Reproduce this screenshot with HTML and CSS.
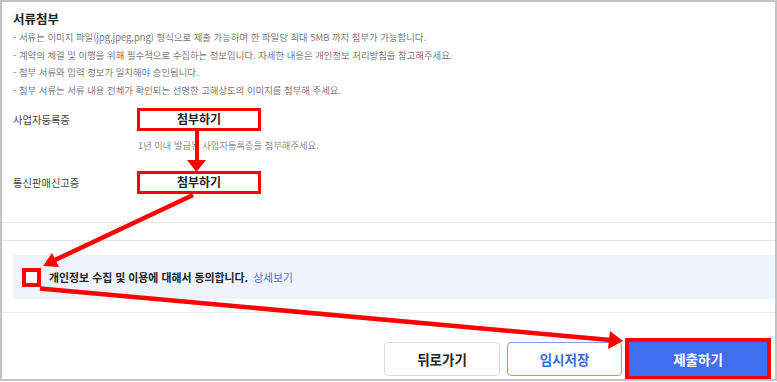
FILE: index.html
```html
<!DOCTYPE html>
<html lang="ko">
<head>
<meta charset="utf-8">
<title>서류첨부</title>
<link rel="stylesheet" href="styles.css">
</head>
<body>
<div class="frame">
  <section class="docs">
    <h2 class="title">서류첨부</h2>
    <ul class="notes">
      <li>- 서류는 이미지 파일(jpg,jpeg,png) 형식으로 제출 가능하며 한 파일당 최대 5MB 까지 첨부가 가능합니다.</li>
      <li>- 계약의 체결 및 이행을 위해 필수적으로 수집하는 정보입니다. 자세한 내용은 개인정보 처리방침을 참고해주세요.</li>
      <li>- 첨부 서류와 입력 정보가 일치해야 승인됩니다.</li>
      <li>- 첨부 서류는 서류 내용 전체가 확인되는 선명한 고해상도의 이미지를 첨부해 주세요.</li>
    </ul>
    <div class="field">
      <span class="label">사업자등록증</span>
      <div class="control">
        <button class="attach" type="button">첨부하기</button>
        <p class="hint">1년 이내 발급된 사업자등록증을 첨부해주세요.</p>
      </div>
    </div>
    <div class="field field-second">
      <span class="label">통신판매신고증</span>
      <div class="control">
        <button class="attach" type="button">첨부하기</button>
      </div>
    </div>
  </section>
  <div class="band"></div>
  <div class="agree">
    <span class="check"></span>
    <span class="agree-text">개인정보 수집 및 이용에 대해서 동의합니다.</span>
    <a class="more" href="#">상세보기</a>
  </div>
  <div class="actions">
    <button class="btn btn-back" type="button">뒤로가기</button>
    <button class="btn btn-save" type="button">임시저장</button>
    <button class="btn btn-submit" type="button">제출하기</button>
  </div>
  <svg class="annot" width="777" height="382" viewBox="0 0 777 382">
    <g fill="#f00" stroke="none">
      <rect x="195" y="130" width="4" height="32"/>
      <polygon points="187,160 206,160 196.5,172"/>
      <polygon points="43,266 59,267 52,253"/>
      <polygon points="623,341 608,349 610,331"/>
    </g>
    <g stroke="#f00" stroke-width="4.5" fill="none" stroke-linecap="butt">
      <line x1="193" y1="195" x2="55" y2="260"/>
      <polyline points="40,288.5 48,289.3 610,340"/>
    </g>
  </svg>
</div>
</body>
</html>
```
FILE: styles.css
```css
* { box-sizing: border-box; }
html, body {
  margin: 0;
  padding: 0;
  background: #fff;
}
body {
  font-family: "Noto Sans CJK KR", "Noto Sans", sans-serif;
  color: #333;
}
.frame {
  position: relative;
  width: 777px;
  height: 381px;
  border: 2px solid #c3c3c3;
  overflow: hidden;
  display: flex;
  flex-direction: column;
}
.docs {
  padding: 8px 11px 28px;
  border-bottom: 1px solid #e6e6e6;
}
.title {
  margin: 0;
  font-size: 12.5px;
  line-height: 18px;
  font-weight: 700;
  color: #222;
}
.notes {
  list-style: none;
  margin: 1px 0 0;
  padding: 0;
  font-size: 9.4px;
  line-height: 17.6px;
  color: #7a7a7a;
}
.field {
  display: grid;
  grid-template-columns: 124px 1fr;
  margin-top: 8.6px;
}
.field-second { margin-top: 19px; }
.label {
  font-size: 10.3px;
  line-height: 23px;
  color: #444;
}
.control {
  display: flex;
  flex-direction: column;
  align-items: flex-start;
}
.attach {
  width: 124px;
  height: 23px;
  border: 3.5px solid #f00;
  background: #fff;
  font-family: inherit;
  font-size: 12px;
  font-weight: 700;
  color: #222;
  padding: 0;
  line-height: 1;
}
.hint {
  margin: 7px 0 0 1px;
  font-size: 9.3px;
  line-height: 14px;
  color: #8d8d8d;
}
.band {
  height: 18px;
  border-bottom: 1px solid #e6e6e6;
}
.agree {
  margin: 14px 0 0 11px;
  height: 44px;
  background: #eff3fb;
  display: flex;
  align-items: center;
  padding-left: 9px;
}
.check {
  width: 19px;
  height: 19px;
  border: 4.5px solid #f00;
  background: #fff;
  margin-top: 2px;
  margin-right: 8px;
}
.agree-text {
  font-size: 10.9px;
  font-weight: 700;
  color: #222;
}
.more {
  margin-left: 5px;
  font-size: 10.8px;
  color: #4776d4;
  text-decoration: none;
}
.actions {
  margin-top: 13px;
  border-top: 1px solid #ececec;
  padding: 29px 8px 0 0;
  display: flex;
  justify-content: flex-end;
  gap: 7px;
}
.btn {
  height: 34px;
  border-radius: 4px;
  font-family: inherit;
  font-size: 13.5px;
  font-weight: 700;
  padding: 0;
}
.btn-back {
  width: 116px;
  border: 1px solid #dcdcdc;
  background: #fff;
  color: #222;
}
.btn-save {
  width: 115px;
  border: 1px solid #7f9fe6;
  background: #fff;
  color: #3d6bd6;
}
.btn-submit {
  width: 138px;
  border: 0;
  border-radius: 0;
  background: #3f6ff0;
  color: #fff;
  outline: 4px solid #f00;
}
.annot {
  position: absolute;
  left: -2px;
  top: -2px;
  pointer-events: none;
}
```
